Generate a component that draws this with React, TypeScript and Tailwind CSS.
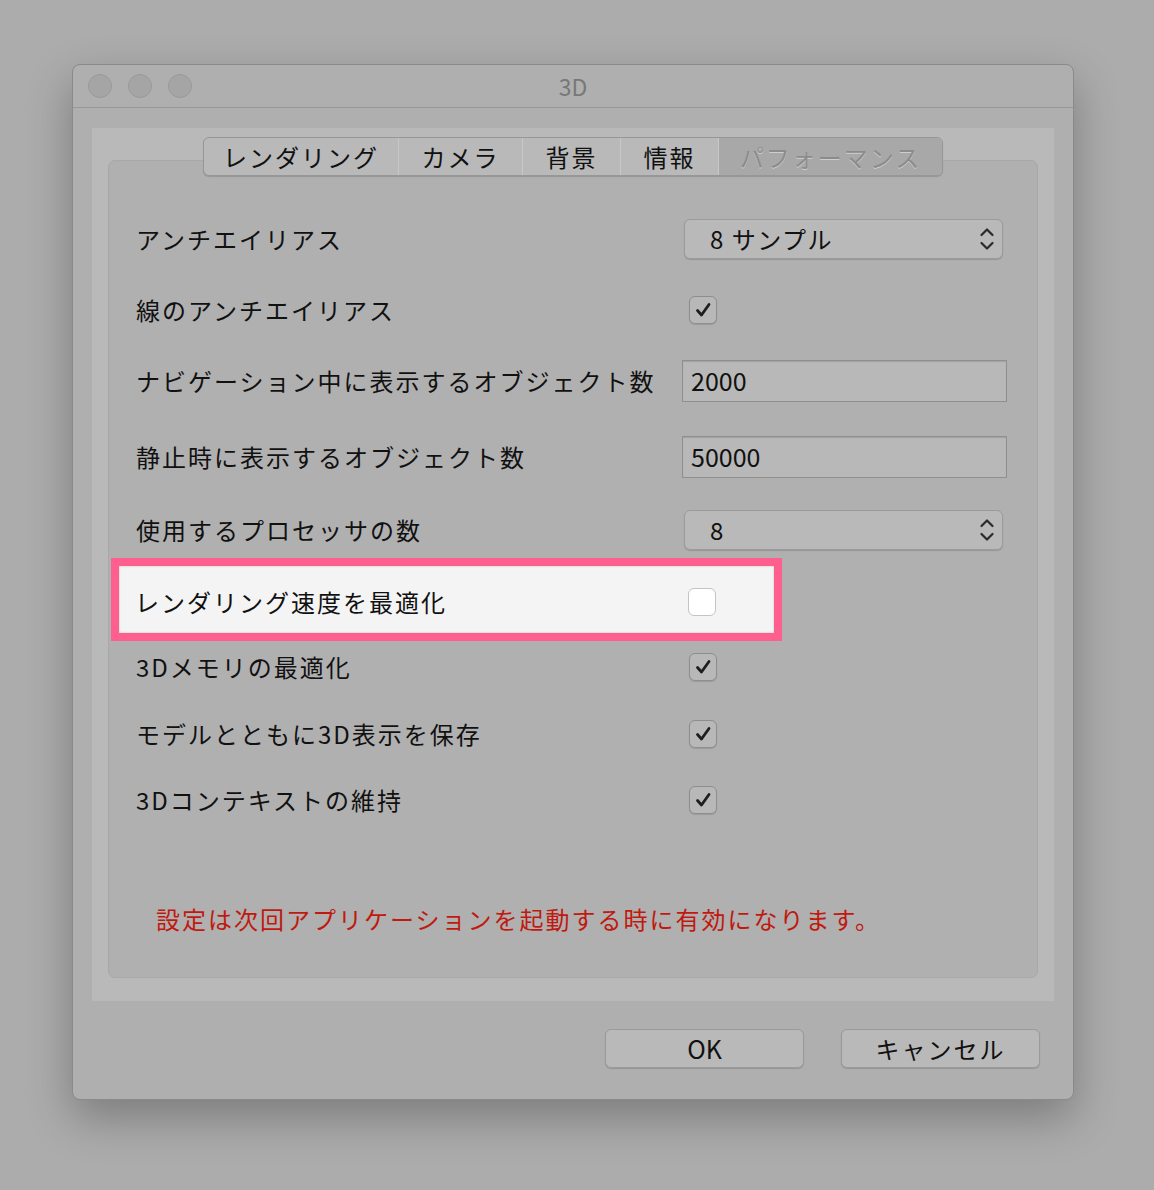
const font = { fontFamily: '"Noto Sans CJK JP", "Noto Sans", sans-serif' };

function Chevrons() {
  return (
    <svg width="16" height="26" viewBox="0 0 16 26" fill="none" stroke="#2a2a2a" strokeWidth="2.2" strokeLinecap="round" strokeLinejoin="round">
      <path d="M2.5 9 L8 3.5 L13.5 9" />
      <path d="M2.5 17 L8 22.5 L13.5 17" />
    </svg>
  );
}

function Popup({ value }: { value: string }) {
  return (
    <div className="flex h-[40px] w-[319px] items-center justify-between rounded-[6px] border border-[#9b9b9b] bg-[#b9b9b9] pl-[25px] pr-[7px] shadow-[0_1px_1px_rgba(0,0,0,0.15)]">
      <span className="text-[24px] tracking-[1.5px] text-[#111]">{value}</span>
      <Chevrons />
    </div>
  );
}

function Check({ on = true, white = false }: { on?: boolean; white?: boolean }) {
  return (
    <div
      className={
        white
          ? "flex h-[28px] w-[28px] items-center justify-center rounded-[6px] border border-[#c4c4c4] bg-white"
          : "flex h-[28px] w-[28px] items-center justify-center rounded-[6px] border border-[#8e8e8e] bg-[#b8b8b8] shadow-[0_1px_1px_rgba(0,0,0,0.12)]"
      }
    >
      {on && (
        <svg width="18" height="18" viewBox="0 0 18 18" fill="none" stroke="#1e1e1e" strokeWidth="2.8" strokeLinecap="round" strokeLinejoin="round">
          <path d="M3.5 9.5 L7.5 14 L15 3.5" />
        </svg>
      )}
    </div>
  );
}

function Field({ value }: { value: string }) {
  return (
    <div className="ml-[-2px] flex h-[42px] w-[325px] items-center border border-[#8f8f8f] bg-[#b8b8b8] pl-[8px] shadow-[inset_0_1px_1px_rgba(0,0,0,0.12)]">
      <span className="text-[25px] text-[#111]">{value}</span>
    </div>
  );
}

function Row({ label, mt, children, h = "h-[40px]" }: { label: string; mt: string; h?: string; children: React.ReactNode }) {
  return (
    <div className={`flex items-center ${h} ${mt}`}>
      <div className="w-[575px] pl-[27px] text-[24px] tracking-[2px] text-[#111]">{label}</div>
      {children}
    </div>
  );
}

const tabs = ["レンダリング", "カメラ", "背景", "情報", "パフォーマンス"];
const tabW = ["w-[195px]", "w-[124px]", "w-[98px]", "w-[98px]", "w-[223px]"];

export default function App() {
  return (
    <div className="min-h-[1190px] bg-[#acacac] pl-[72px] pt-[64px]" style={font}>
      <div className="flex h-[1036px] w-[1002px] flex-col rounded-[8px] border border-[#8a8a8a] bg-[#afafaf] shadow-[0_18px_45px_rgba(0,0,0,0.28)]">
        {/* title bar */}
        <div className="relative flex h-[43px] items-center justify-center border-b border-[#979797]">
          <div className="absolute left-[15px] top-[9px] flex gap-[16px]">
            <div className="h-[24px] w-[24px] rounded-full border border-[#9a9a9a] bg-[#a5a5a5]" />
            <div className="h-[24px] w-[24px] rounded-full border border-[#9a9a9a] bg-[#a5a5a5]" />
            <div className="h-[24px] w-[24px] rounded-full border border-[#9a9a9a] bg-[#a5a5a5]" />
          </div>
          <span className="text-[23px] text-[#787878]">3D</span>
        </div>

        {/* content panel */}
        <div className="mx-[19px] mt-[20px] flex h-[873px] flex-col bg-[#b9b9b9] px-[16px] pt-[9px]">
          <div className="relative z-10 flex justify-center">
            <div className="flex h-[39px] overflow-hidden rounded-[6px] border border-[#979797] bg-[#b9b9b9] shadow-[0_1px_1px_rgba(0,0,0,0.15)]">
              {tabs.map((t, i) => (
                <div
                  key={t}
                  className={`flex items-center justify-center text-[24px] tracking-[2px] ${tabW[i]} ${
                    i === 4
                      ? "bg-[#a8a8a8] text-[#8c8c8c] [text-shadow:0_1px_0_rgba(255,255,255,0.45)]"
                      : "border-r border-[#c8c8c8] text-[#111]"
                  }`}
                >
                  {t}
                </div>
              ))}
            </div>
          </div>

          <div className="mt-[-16px] flex h-[818px] flex-col rounded-[7px] border border-[#a8a8a8] bg-[#b0b0b0]">
            <Row label="アンチエイリアス" mt="mt-[58px]">
              <Popup value="8 サンプル" />
            </Row>
            <Row label="線のアンチエイリアス" mt="mt-[31px]">
              <div className="ml-[5px]"><Check /></div>
            </Row>
            <Row label="ナビゲーション中に表示するオブジェクト数" mt="mt-[30px]" h="h-[42px]">
              <Field value="2000" />
            </Row>
            <Row label="静止時に表示するオブジェクト数" mt="mt-[34px]" h="h-[42px]">
              <Field value="50000" />
            </Row>
            <Row label="使用するプロセッサの数" mt="mt-[32px]">
              <Popup value="8" />
            </Row>

            <div className="ml-[2px] mt-[8px] h-[83px] w-[671px] border-[8px] border-[#ff5f8f]">
              <div className="flex h-full items-center bg-[#f4f4f4] pt-[4px] shadow-[inset_0_0_2px_rgba(0,0,0,0.25)]">
                <div className="w-[569px] pl-[16px] text-[24px] tracking-[2px] text-[#111]">レンダリング速度を最適化</div>
                <Check on={false} white />
              </div>
            </div>

            <Row label="3Dメモリの最適化" mt="mt-[6px]">
              <div className="ml-[5px]"><Check /></div>
            </Row>
            <Row label="モデルとともに3D表示を保存" mt="mt-[27px]">
              <div className="ml-[5px]"><Check /></div>
            </Row>
            <Row label="3Dコンテキストの維持" mt="mt-[26px]">
              <div className="ml-[5px]"><Check /></div>
            </Row>

            <div className="mt-[79px] flex h-[40px] items-center pl-[47px] text-[24px] tracking-[2px] text-[#c0190f]">
              設定は次回アプリケーションを起動する時に有効になります。
            </div>
          </div>
        </div>

        {/* buttons */}
        <div className="mr-[33px] mt-[28px] flex justify-end gap-[37px]">
          <div className="flex h-[39px] w-[199px] items-center justify-center rounded-[6px] border border-[#9a9a9a] bg-[#b9b9b9] text-[25px] text-[#111] shadow-[0_1px_1px_rgba(0,0,0,0.15)]">
            OK
          </div>
          <div className="flex h-[39px] w-[199px] items-center justify-center rounded-[6px] border border-[#9a9a9a] bg-[#b9b9b9] text-[24px] tracking-[2px] text-[#111] shadow-[0_1px_1px_rgba(0,0,0,0.15)]">
            キャンセル
          </div>
        </div>
      </div>
    </div>
  );
}
